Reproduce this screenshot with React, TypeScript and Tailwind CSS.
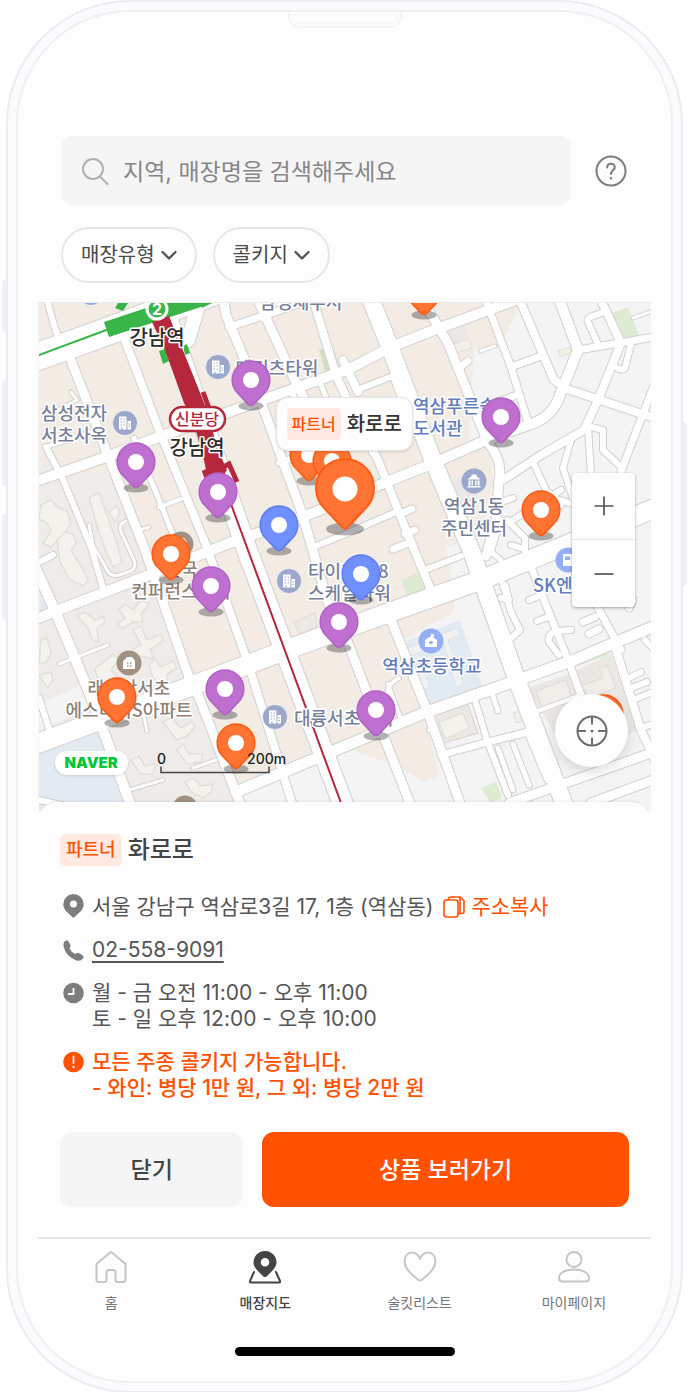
import type { ReactNode } from "react";

type Tone = "purple" | "orange" | "blue";

const TONES: Record<Tone, { fill: string; stroke: string }> = {
  purple: { fill: "#bf6fd0", stroke: "#b160c4" },
  orange: { fill: "#ff7333", stroke: "#fc5a10" },
  blue: { fill: "#7090ff", stroke: "#5b7cf5" },
};

/* Map coordinates: the canvas origin is 38,303. */
const OX = 38;
const OY = 303;

const PINS: { x: number; y: number; tone: Tone; name: string }[] = [
  { x: 423, y: 289, tone: "orange", name: "매장 1" },
  { x: 250, y: 380, tone: "purple", name: "매장 2" },
  { x: 500, y: 417, tone: "purple", name: "매장 3" },
  { x: 308, y: 455, tone: "orange", name: "매장 4" },
  { x: 331, y: 461, tone: "orange", name: "매장 5" },
  { x: 135, y: 462, tone: "purple", name: "매장 6" },
  { x: 217, y: 492, tone: "purple", name: "매장 7" },
  { x: 540, y: 510, tone: "orange", name: "매장 8" },
  { x: 278, y: 525, tone: "blue", name: "매장 9" },
  { x: 170, y: 554, tone: "orange", name: "매장 10" },
  { x: 360, y: 574, tone: "blue", name: "매장 11" },
  { x: 210, y: 586, tone: "purple", name: "매장 12" },
  { x: 338, y: 622, tone: "purple", name: "매장 13" },
  { x: 224, y: 689, tone: "purple", name: "매장 14" },
  { x: 116, y: 697, tone: "orange", name: "매장 15" },
  { x: 375, y: 710, tone: "purple", name: "매장 16" },
  { x: 603, y: 714, tone: "orange", name: "매장 17" },
  { x: 235, y: 743, tone: "orange", name: "매장 18" },
];

const ROADS: [string, number][] = [
  // minor lanes
  ["M45 296L53 325L58 340L50 352", 6],
  ["M48 446L96 430", 4],
  ["M70 392L76 400L50 414", 3],
  ["M45 447L61 477L90 547L102 588", 6],
  ["M38 562L52 555", 6],
  ["M158 507L180 499", 4],
  ["M133 438L158 500L172 535L180 560", 5],
  ["M148 527L138 530M88 525L92 545L104 566Q108 578 118 575L130 571Q136 568 133 560L120 532Q117 524 125 521", 3],
  ["M271 313L262 318M228 327L271 313L316 297", 7],
  ["M311 296L335 375L360 430L377 460L393 500L412 547L430 590", 8],
  ["M290 390L304 424L330 470L352 520", 6],
  ["M320 385L345 445", 5],
  ["M356 390L392 376L408 420", 6],
  ["M357 392L342 360", 8],
  ["M278 463L300 455L346 440", 6],
  ["M310 548L347 533L395 512", 6],
  ["M398 514L411 509M404 534L414 530M392 549L410 542", 7],
  ["M458 368L467 361", 7],
  ["M480 351L494 346", 3],
  ["M483 296L510 367L527 422", 7],
  ["M492 404L513 396M510 367L540 356", 7],
  ["M517 296L553 380L566 389L650 417", 8],
  ["M577 350L630 341L652 337", 7],
  ["M598 296L620 343L597 400L583 430L540 455L502 480", 8],
  ["M596 342L587 322Q585 318 592 316L603 312", 6],
  ["M630 344L624 368Q620 372 614 366", 6],
  ["M632 318L652 311", 3],
  ["M587 426L590 475", 6],
  ["M590 427L602 430L602 450L620 467", 6],
  ["M652 388L630 445L617 480", 7],
  ["M532 462L545 490L560 505M570 440L562 468L572 498", 6],
  ["M497 503L512 498M512 520L560 490", 6],
  ["M506 520L524 538L524 552M510 545L520 548", 6],
  ["M545 496L575 505M600 520L652 505", 6],
  ["M424 570L460 556", 6],
  ["M500 560L490 552L500 520", 5],
  ["M500 578L510 612L519 630L508 640M500 598L508 600L504 585", 6],
  ["M530 567L567 660L580 695", 7],
  ["M528 600L540 595M536 621L550 616M558 655L548 642Q546 634 556 631L570 630", 6],
  ["M590 595L620 650M582 622L594 617M588 634L598 629M628 608L632 600", 7],
  ["M613 643L640 730L654 760", 8],
  ["M628 678L640 672M630 688L646 682M644 640L652 648", 6],
  ["M632 700L652 692M640 728L652 724", 6],
  ["M440 755L483 743L527 732", 7],
  ["M473 697L487 743L507 795", 6],
  ["M490 690L497 711M497 748L512 790M512 744L528 785M527 735L546 780", 5],
  ["M428 730L435 728M534 712L580 695", 4],
  ["M387 697Q384 685 398 678M387 684L402 725", 4],
  ["M508 803L650 753M590 803L652 780", 9],
  ["M58 664L107 645M140 703L146 731", 3],
  ["M128 790L162 780M192 768L215 760", 3],
  ["M38 800L90 812M38 698L50 735", 6],
  // cross streets
  ["M30 483L105 457L158 437L225 413L348 369L390 347L433 330L515 300", 10],
  ["M30 621L55 611L148 575L231 542L295 520L348 498L383 483L433 463L483 441L527 425Q553 418 560 392L577 350L557 296", 10],
  ["M235 792L318 757L423 713L517 680L573 660L613 643L654 626", 11],
  // long streets
  ["M66 350L108 458L144 550L190 683L198 697L240 806", 9],
  ["M122 335L158 430L205 545L246 660L292 806", 8],
  ["M30 558L55 613L90 697L130 806", 10],
  ["M222 296L225 315L250 375L301 513L327 603L347 643L383 737L410 806", 9],
  ["M255 296L290 372L304 400", 9],
  ["M390 620L427 713L460 806", 9],
  ["M419 296L447 343L487 443Q502 460 498 480L495 520L485 556", 9],
  ["M366 290L390 350L433 463L470 550L517 683L566 812", 17],
  // boulevards
  ["M160 300L246 550L345 812", 20],
  ["M30 746L105 718L188 687L285 650L348 627L387 613L480 580L570 543L654 508", 19],
  ["M30 359L110 330L260 274", 27],
  ["M187 340L200 296", 14],
];

const BLOBS: string[] = [
  "M40 505l10-5 8 8 8 3 4 12 -6 10 -14 14 -8-4 8-12 -4-8 -8-4z",
  "M56 540l8-8 8 2 3 8 -5 9 7 10 10 18 -4 7 -14-6 -10-18z",
  "M88 497l10-4 8 22 10 28 5 20 -9 4 -8-18 -7-20z",
  "M108 512l8-6 3 6 -5 10z",
  "M76 615l8-3 10 8 8-4 2 6 -8 6 2 14 -7-2 -4-12z",
  "M118 610l6-6 8 6 8-10 8 4 -8 10 2 8 -10 0 -10 6 -6-4 8-6z",
  "M132 630l8-4 6 14 14-6 2 7 -12 8 2 10 -8-2 -10-2 -2-6 8-4z",
  "M94 668l12-8 6-6 6 6 -8 10 6 6 -6 6 -14-4z",
  "M148 665l6-6 6 8 12-6 4 7 -10 6 2 12 -8-2 -8-6z",
  "M162 722l8-4 10 10 10-6 4 4 -8 10 -10 4z",
  "M176 750l6-6 6 10 14 0 -2 8 -14 2z",
  "M130 760l8-4 6 10 10-2 -2 10 -12 0z",
  "M184 782l8-4 8 8 12-2 -2 8 -8 6 -12-6z",
  "M40 640l6-2 4 14 -4 10 -8 2zM38 675l12-3 2 8 -6 8z",
];

type LabelTone = "slate" | "blue" | "brown" | "black";
const LABEL_FILL: Record<LabelTone, string> = {
  slate: "#76809b",
  blue: "#617dc0",
  brown: "#8d8178",
  black: "#2c2c2c",
};

const LABELS: { x: number; y: number; lines: string[]; tone: LabelTone; a?: "middle" | "start"; s?: number }[] = [
  { x: 300, y: 309, lines: ["삼성세무서"], tone: "slate" },
  { x: 276, y: 375, lines: ["메리츠타워"], tone: "slate" },
  { x: 73, y: 420, lines: ["삼성전자", "서초사옥"], tone: "slate" },
  { x: 412, y: 413, lines: ["역삼푸른솔", "도서관"], tone: "blue", a: "start" },
  { x: 473, y: 513, lines: ["역삼1동", "주민센터"], tone: "slate" },
  { x: 532, y: 592, lines: ["SK엔카"], tone: "blue", a: "start" },
  { x: 180, y: 576, lines: ["한국", "컨퍼런스센터"], tone: "brown" },
  { x: 307, y: 578, lines: ["타이거318", "스케일타워"], tone: "slate", a: "start" },
  { x: 431, y: 673, lines: ["역삼초등학교"], tone: "blue" },
  { x: 128, y: 695, lines: ["래미안서초", "에스티지S아파트"], tone: "brown" },
  { x: 293, y: 725, lines: ["대륭서초타워"], tone: "slate", a: "start" },
  { x: 156, y: 345, lines: ["강남역"], tone: "black", s: 20 },
  { x: 196, y: 455, lines: ["강남역"], tone: "black", s: 20 },
];

function Office({ x, y }: { x: number; y: number }) {
  return (
    <g transform={`translate(${x} ${y})`}>
      <circle r="12.5" fill="#9ba8cb" stroke="#fff" strokeOpacity=".6" />
      <path d="M-6-6.500H1.500V6.500H-6Z M2.500-2H6V6.500H2.500Z" fill="#fff" />
      <path d="M-4.500-4h1.500m1.500 0h1.500M-4.500-1h1.500m1.500 0h1.500M-4.500 2h1.500m1.500 0h1.500M-3 6.500V4.500M3.500 1h1.500M3.500 3.500h1.500" stroke="#9ba8cb" strokeWidth="1.200" />
    </g>
  );
}

function House({ x, y }: { x: number; y: number }) {
  return (
    <g transform={`translate(${x} ${y})`}>
      <circle r="12.500" fill="#a09184" />
      <path d="M-6-1.500L-2-6H3L6-2.500V6H-6Z" fill="#fff" />
      <path d="M-2 0h1.500M1 0h1.500M-2 3h1.500M1 3h1.500" stroke="#a09184" strokeWidth="1.500" />
    </g>
  );
}

function MapDrawing() {
  return (
    <svg viewBox="38 303 612 508" className="absolute inset-0 h-[508px] w-[612px]" aria-hidden="true">
      <rect x="38" y="303" width="612" height="508" fill="#f3ece5" />
      <path d="M520 303L500 345L473 350L468 440L487 443L493 480L480 535L445 547L455 600L452 612L402 640L425 720L438 775L424 782L395 765L350 750L230 790L240 811H650V303Z" fill="#f4f4f4" />
      <path d="M38 462L60 468L110 475L125 490L140 530L150 555L190 683L60 740L38 700Z" fill="#efebe8" />
      <path d="M105 720L198 697L240 811H38V790Z" fill="#efebe8" />
      <path d="M38 565L53 605L38 614ZM38 750L100 730L128 811H38Z" fill="#e3eaf2" />
      <path d="M38 704L80 686L88 708L38 730Z" fill="#f4f4f4" />
      <path d="M402 642L459 620L482 688L427 709Z" fill="#e2eaf2" />
      <path d="M406 648l18-6 3 7 -18 7zM440 634l16-6 3 7 -12 5 16 44 -8 3zM412 668l8-3 9 22 -8 3z" fill="#f0f1f2" stroke="#dcdfe3" strokeWidth=".8" />
      <path d="M318 350L331 345L338 366L324 371Z" fill="#d4e0c4" />
      <path d="M611 313L627 307L638 336L622 339ZM401 580L417 573L424 590L406 597ZM480 788L495 782L501 798L490 803ZM571 664L608 652L608 655L573 667Z" fill="#dcebd2" />
      <path d="M444 333L464 326L471 348L452 356ZM448 484L475 467L485 475L470 510L455 500Z" fill="#eae8e7" />
      <path d="M292 623L314 612L316 627L298 634L296 628Z" fill="#ece8e4" stroke="#dfdbd6" />
      <path d="M526 688L568 674L610 654L637 730L570 758Z" fill="#ebe7e3" />
      <path d="M535 691l30-11 6 18 -30 11zM580 686l22-8 -4-10 8-3 9 23 -26 10z" fill="#f1eeea" stroke="#dfdad4" />
      <path d="M432 715L466 703L477 733L440 744L437 735L432 734Z" fill="#ece9e5" stroke="#d6d3d0" />
      <path d="M438 722l24-9 6 15 -24 11z" fill="#f4f2ed" stroke="#dedad4" />
      <path d="M512 713l10-3 4 9 -10 4zM557 351l13-4 2 5 -13 5zM452 344l16-5 3 9 -15 5z" fill="#f3f0ea" stroke="#e2ded6" />
      {BLOBS.map((d) => (
        <path key={d} d={d} fill="#f4f2ed" stroke="#e3dfd9" strokeWidth="1.500" />
      ))}
      <g fill="none" strokeLinejoin="round" strokeLinecap="round">
        {ROADS.map(([d, w]) => (
          <path key={d} d={d} stroke="#d2d0ce" strokeWidth={w + 2} />
        ))}
        {ROADS.map(([d, w]) => (
          <path key={d} d={d} stroke="#fefefe" strokeWidth={w} />
        ))}
      </g>
      <path d="M38 355L108 329" stroke="#3ab549" strokeWidth="2" />
      <path d="M103 322L160 303H212L108 337ZM117 303h10l-5 8-8-3zM201 303h10l-10 5zM158 351l6-2 4 12-6 3zM182 346l4-2 3 9-5 2z" fill="#3ab549" />
      <path d="M230 504L340 803" stroke="#b5283c" strokeWidth="2" />
      <path d="M151 322L168 316L196 385L205 408L217 450L226 470L221 478L207 480L203 460L192 420L183 403L164 350Z" fill="#b5283c" />
      <path d="M202 392L210 414M205 476L228 464L236 482M203 470l4 10" fill="none" stroke="#b5283c" strokeWidth="5" />
      <circle cx="156" cy="309" r="10" fill="#3ab549" stroke="#fff" strokeWidth="3" />
      <text x="156" y="315" textAnchor="middle" fill="#fff" className="font-['Inter',sans-serif] text-[16px] font-bold">2</text>
      <circle cx="90" cy="293" r="12" fill="#8fa9f0" />
      <Office x={217} y={367} />
      <Office x={124} y={423} />
      <Office x={288} y={581} />
      <Office x={274} y={717} />
      <House x={180} y={544} />
      <House x={128} y={663} />
      <House x={184} y={808} />
      <g transform="translate(473 481)">
        <circle r="12.500" fill="#9ba8cb" />
        <path d="M-6.500-1.500L-2.500-5V-6.500H2.500V-5L6.500-1.500ZM-5.500-.5h2v5h-2zM-2.500-.5h1.500v5h-1.500zM1-.5h1.500v5H1zM3.500-.5h2v5h-2zM-6.500 5h13v1.500h-13z" fill="#fff" />
      </g>
      <g transform="translate(430 641)">
        <circle r="12.500" fill="#95aff4" />
        <path d="M-6-1L0-5L6-1V6H-6ZM0-7h3v3H0z" fill="#fff" />
        <circle cy="1.500" r="1.800" fill="#95aff4" />
      </g>
      <g transform="translate(567 560)">
        <circle r="12.500" fill="#95aff4" />
        <path d="M-5-6H4V6H-5Z" fill="#fff" />
        <path d="M-3-3.500H2V0H-3Z" fill="#95aff4" />
      </g>
      {LABELS.map((l) => (
        <text
          key={l.lines[0] + l.y}
          y={l.y}
          textAnchor={l.a ?? "middle"}
          fill={LABEL_FILL[l.tone]}
          stroke="#fff"
          strokeWidth="3"
          strokeLinejoin="round"
          paintOrder="stroke"
          fontSize={l.s ?? 18}
          className="font-['Noto_Sans_CJK_KR',sans-serif] font-medium"
        >
          {l.lines.map((line, i) => (
            <tspan key={line} x={l.x} dy={i === 0 ? 0 : 22}>
              {line}
            </tspan>
          ))}
        </text>
      ))}
      <rect x="169" y="407" width="55" height="24" rx="12" fill="#fff" stroke="#b5283c" strokeWidth="2.500" />
      <text x="196" y="425" textAnchor="middle" fill="#b5283c" className="font-['Noto_Sans_CJK_KR',sans-serif] text-[16px] font-medium">신분당</text>
    </svg>
  );
}

function Pin({ x, y, tone, name }: { x: number; y: number; tone: Tone; name: string }) {
  const c = TONES[tone];
  return (
    <button type="button" aria-label={name} className="absolute h-14 w-12" style={{ left: x - OX - 24, top: y - OY - 24 }}>
      <svg viewBox="-24 -24 48 56" className="block h-14 w-12">
        <ellipse cy="26" rx="12.500" ry="4.500" fill="#000" fillOpacity=".3" />
        <path d="M0 25.500C-2 25.500-3 24-13.500 13A18.800 18.800 0 1 1 13.500 13C3 24 2 25.500 0 25.500Z" fill={c.fill} stroke={c.stroke} strokeWidth="1.500" />
        <circle r="8" fill="#fff" />
      </svg>
    </button>
  );
}

function Chip({ children }: { children: ReactNode }) {
  return (
    <button type="button" className="flex h-14 items-center gap-1.5 rounded-full border-2 border-[#e6e6e6] px-[18px] text-[20px] text-[#4a4a4a]">
      {children}
      <svg viewBox="0 0 16 16" className="h-4 w-4" fill="none" stroke="#4f4f4f" strokeWidth="2.200" strokeLinecap="round" strokeLinejoin="round">
        <path d="M1.500 5L8 11.500L14.500 5" />
      </svg>
    </button>
  );
}

function NavItem({ label, active, children }: { label: string; active?: boolean; children: ReactNode }) {
  return (
    <a
      href="#"
      aria-current={active ? "page" : undefined}
      className={
        active
          ? "flex flex-1 flex-col items-center gap-2 text-[14px] leading-5 font-medium text-[#444]"
          : "flex flex-1 flex-col items-center gap-2 text-[14px] leading-5 text-[#757575]"
      }
    >
      <svg viewBox="0 0 36 36" className="h-9 w-9" fill="none" stroke="#c6c6c6" strokeWidth="2" strokeLinejoin="round" strokeLinecap="round">
        {children}
      </svg>
      {label}
    </a>
  );
}

export default function App() {
  return (
    <div className="min-h-screen bg-white px-1.5 font-['Inter','Noto_Sans_CJK_KR',sans-serif]">
      <div className="relative mx-auto max-w-[679px] rounded-[124px] border-2 border-[#ebecf1] bg-[#fbfbfd] p-2">
        <span className="absolute top-[277px] -left-1.5 h-[53px] w-1 rounded-l-sm bg-[#f1f1f5]" />
        <span className="absolute top-[378px] -left-1.5 h-[106px] w-1 rounded-l-sm bg-[#f1f1f5]" />
        <span className="absolute top-[512px] -left-1.5 h-[106px] w-1 rounded-l-sm bg-[#f1f1f5]" />
        <span className="absolute top-[420px] -right-1.5 h-[164px] w-1 rounded-r-sm bg-[#f1f1f5]" />
        <div className="relative rounded-[114px] border-2 border-[#f0f0f4] bg-[#fdfdfd] px-5 pb-[25px]">
          <div className="absolute top-0 left-1/2 h-4 w-[114px] -translate-x-1/2 rounded-b-xl border-2 border-t-0 border-[#f4f4f6]">
            <div className="mx-0.5 mt-0.5 h-2.5 rounded-b-lg border-2 border-[#f8f8f9]" />
          </div>

          <header className="flex items-center gap-6 px-[23px] pt-[124px] pr-6">
            <label className="flex h-[69px] min-w-0 flex-1 items-center gap-3.5 rounded-xl bg-[#f5f5f5] px-5">
              <svg viewBox="0 0 28 28" className="h-7 w-7 shrink-0" fill="none" stroke="#b0b0b0" strokeWidth="2" strokeLinecap="round">
                <circle cx="12" cy="12" r="10" />
                <path d="M19 19.500L26.500 27" />
              </svg>
              <span className="sr-only">매장 검색</span>
              <input
                type="search"
                placeholder="지역, 매장명을 검색해주세요"
                className="h-full min-w-0 flex-1 bg-transparent pt-0.5 text-[23px] text-[#444] outline-none placeholder:text-[#868686]"
              />
            </label>
            <button type="button" aria-label="도움말">
              <svg viewBox="0 0 32 32" className="h-8 w-8" fill="none" stroke="#7c7c7c" strokeWidth="2" strokeLinecap="round">
                <circle cx="16" cy="16" r="14.500" />
                <path d="M12.200 12.500C12.200 7.500 19.800 7.500 19.800 12.300C19.800 15.300 16 15.500 16 19" />
                <circle cx="16" cy="23.300" r=".6" fill="#7c7c7c" strokeWidth="1.200" />
              </svg>
            </button>
          </header>

          <div className="flex gap-4 px-[23px] pt-[22px] pb-[19px]">
            <Chip>매장유형</Chip>
            <Chip>콜키지</Chip>
          </div>

          <section aria-label="매장 지도" className="relative h-[500px] border-t border-[#ebebeb] bg-[#f4f4f4]">
            <div className="absolute inset-x-0 top-0 h-[508px] overflow-hidden">
              <div className="absolute top-0 left-1/2 h-[508px] w-[612px] -translate-x-1/2">
                <MapDrawing />
                {PINS.map((p) => (
                  <Pin key={p.name} {...p} />
                ))}
                <button type="button" aria-label="화로로" className="absolute top-[149px] left-[266px] h-[84px] w-20">
                  <svg viewBox="-40 -37 80 84" className="block h-[84px] w-20">
                    <ellipse cy="40" rx="19" ry="6.500" fill="#000" fillOpacity=".3" />
                    <path d="M0 40C-2 40-4 37-20 20A29 29 0 1 1 20 20C4 37 2 40 0 40Z" fill="#ff7333" stroke="#ff5c14" strokeWidth="2" />
                    <circle r="12.500" fill="#fff" />
                  </svg>
                </button>
                <div className="absolute top-[94px] left-[237px] flex h-[54px] items-center gap-1.5 rounded-xl border border-[#e5e5e5] bg-[#fdfdfd] px-2.5 text-[20px] font-medium text-[#333] shadow-sm">
                  <span className="flex h-8 items-center rounded-sm bg-[#ffe9e1] px-[5px] text-[16px] text-[#ff5100]">파트너</span>
                  화로로
                </div>
                <span className="absolute top-[448px] left-4 flex h-6 items-center rounded-full bg-white px-2.5 text-[15px] font-black text-[#06c73c] shadow">
                  NAVER
                </span>
                <svg viewBox="0 0 130 30" className="absolute top-[446px] left-[117px] h-[30px] w-[130px]" aria-label="축척 200m">
                  <text x="1" y="15" className="font-['Inter',sans-serif] text-[14px] font-medium" fill="#222">0</text>
                  <text x="91" y="15" className="font-['Inter',sans-serif] text-[14px] font-medium" fill="#222">200m</text>
                  <path d="M5 17.500V23.500H113V17.500" fill="none" stroke="#444" strokeWidth="1.500" />
                </svg>
              </div>
            </div>
            <div className="absolute top-[170px] right-4 w-[63px] divide-y divide-[#e5e5e5] rounded-sm bg-[#fdfdfd] shadow-[0_1px_3px_rgba(0,0,0,0.35)]">
              <button type="button" aria-label="확대" className="flex h-[67px] w-full items-center justify-center">
                <svg viewBox="0 0 20 20" className="h-5 w-5" stroke="#555" strokeWidth="1.700"><path d="M.5 10H19.500M10 .5V19.500" /></svg>
              </button>
              <button type="button" aria-label="축소" className="flex h-[67px] w-full items-center justify-center">
                <svg viewBox="0 0 20 20" className="h-5 w-5" stroke="#555" strokeWidth="1.700"><path d="M.5 10H19.500" /></svg>
              </button>
            </div>
            <button type="button" aria-label="현재 위치" className="absolute right-[23px] bottom-[35px] flex h-[73px] w-[73px] items-center justify-center rounded-full bg-[#fdfdfd] shadow-[0_4px_14px_rgba(0,0,0,0.14)]">
              <svg viewBox="0 0 32 32" className="h-8 w-8" fill="none" stroke="#6c6c6c" strokeWidth="2">
                <circle cx="16" cy="16" r="14.500" />
                <path d="M16 1.500V9.500M16 22.500V30.500M1.500 16H10M22 16H30.500" />
                <circle cx="16" cy="16" r="1.500" fill="#6c6c6c" stroke="none" />
              </svg>
            </button>
          </section>

          <main className="relative rounded-t-[20px] bg-[#fdfdfd] px-[22px] pt-8 text-[21px] leading-[26px] text-[#555] shadow-[0_-3px_3px_-2px_rgba(0,0,0,0.08)]">
            <h1 className="flex items-center gap-1.5 text-[24px] leading-8 font-medium text-[#444]">
              <span className="flex h-8 items-center rounded-md bg-[#ffe9e1] px-[6px] text-[18px] text-[#ff5100]">파트너</span>
              화로로
            </h1>

            <div className="flex flex-col gap-[17px] pt-7 pl-[3px]">
              <div className="flex items-center gap-2">
                <svg viewBox="0 0 21 26" className="h-[26px] w-[21px] shrink-0">
                  <path fillRule="evenodd" d="M10.500 0A10.200 10.200 0 0 0 .3 10.200C.3 16 5 18.500 9.500 23.200Q10.500 24 11.500 23.200C16 18.500 20.700 16 20.700 10.200A10.200 10.200 0 0 0 10.500 0ZM10.500 6.500A3.500 3.500 0 1 1 10.500 13.500A3.500 3.500 0 1 1 10.500 6.500Z" fill="#7d7d7d" />
                </svg>
                <address className="not-italic">서울 강남구 역삼로3길 17, 1층 (역삼동)</address>
                <button type="button" className="ml-0.5 flex items-center gap-1.5 text-[#ff5100]">
                  <svg viewBox="0 0 22 22" className="h-[22px] w-[22px]" fill="none" stroke="#ff5100" strokeWidth="1.600" strokeLinejoin="round">
                    <rect x="1" y="4" width="14" height="17" rx="2.500" />
                    <path d="M5.500 4V3Q5.500 1 7.500 1H17L21 4.500V15.500Q21 17.500 19 17.500H15M17 1V17" />
                  </svg>
                  주소복사
                </button>
              </div>
              <div className="flex items-center gap-2">
                <svg viewBox="0 0 21 21" className="h-[21px] w-[21px] shrink-0" fill="#7d7d7d">
                  <path d="M1.500 1.500Q4-.5 5.800 1.800L7.300 5Q8 6.500 6.500 8Q8 12.500 12.500 14Q14.500 12 16.300 13.200L19.500 15.200Q21.500 16.700 20 18.500Q17.500 21.500 13.500 20.500Q3.500 17 .7 7Q0 3.500 1.500 1.500Z" />
                </svg>
                <a href="tel:02-558-9091" className="underline decoration-2 underline-offset-4">02-558-9091</a>
              </div>
              <div className="flex gap-2">
                <svg viewBox="0 0 21 26" className="h-[26px] w-[21px] shrink-0">
                  <circle cx="10.500" cy="13" r="10.300" fill="#7d7d7d" />
                  <path d="M10.500 8V14H5" fill="none" stroke="#fff" strokeWidth="1.800" />
                </svg>
                <p>월 - 금 오전 11:00 - 오후 11:00<br />토 - 일 오후 12:00 - 오후 10:00</p>
              </div>
              <div className="flex gap-2 font-medium text-[#ff5100]">
                <svg viewBox="0 0 21 26" className="h-[26px] w-[21px] shrink-0">
                  <circle cx="10.500" cy="13" r="10.300" fill="#ff5100" />
                  <path d="M10.500 7.500V14" stroke="#fff" strokeWidth="1.800" strokeLinecap="round" />
                  <circle cx="10.500" cy="18" r="1.200" fill="#fff" />
                </svg>
                <p>모든 주종 콜키지 가능합니다.<br />- 와인: 병당 1만 원, 그 외: 병당 2만 원</p>
              </div>
            </div>

            <div className="flex gap-[19px] pt-[31px] pb-[30px] text-[23px] font-medium">
              <button type="button" className="h-[75px] flex-1 rounded-xl bg-[#f5f5f5] text-[#444]">닫기</button>
              <button type="button" className="h-[75px] flex-2 rounded-xl bg-[#ff5100] text-white">상품 보러가기</button>
            </div>
          </main>

          <nav aria-label="주 메뉴" className="border-t-2 border-[#e7e7e7] pt-2.5">
            <div className="-mx-1 flex pr-1">
              <NavItem label="홈">
                <path d="M3.500 15L16.500 4Q18 2.700 19.500 4L32.500 15V31Q32.500 33 30.500 33H24.500Q22.500 33 22.500 31V23Q22.500 21 20.500 21H15.500Q13.500 21 13.500 23V31Q13.500 33 11.500 33H5.500Q3.500 33 3.500 31Z" />
              </NavItem>
              <NavItem label="매장지도" active>
                <path d="M7 23L3 32Q2.500 33.500 4 33.500H32Q33.500 33.500 33 32L29 23" stroke="#444" />
                <path fillRule="evenodd" d="M18 2A11.500 11.500 0 0 0 6.500 13.500C6.500 19 12 23 16.500 27.500Q18 28.700 19.500 27.500C24 23 29.500 19 29.500 13.500A11.500 11.500 0 0 0 18 2ZM18 9A4.300 4.300 0 1 1 18 17.600A4.300 4.300 0 1 1 18 9Z" fill="#444" stroke="none" />
              </NavItem>
              <NavItem label="술킷리스트">
                <path d="M18 9.500C16 5.500 13 3.500 10 3.500C5.500 3.500 2.700 7 2.700 12C2.700 20 10 26 16.500 31Q18 32 19.500 31C26 26 33.300 20 33.300 12C33.300 7 30.500 3.500 26 3.500C23 3.500 20 5.500 18 9.500Z" />
              </NavItem>
              <NavItem label="마이페이지">
                <circle cx="18" cy="10.500" r="7.500" />
                <path d="M3 29C3 24 9 20.500 18 20.500S33 24 33 29Q33 32.500 29.500 32.500H6.500Q3 32.500 3 29Z" />
              </NavItem>
            </div>
          </nav>

          <div className="mx-auto mt-[34px] h-[9px] w-[220px] rounded-full bg-black" />
        </div>
      </div>
    </div>
  );
}
